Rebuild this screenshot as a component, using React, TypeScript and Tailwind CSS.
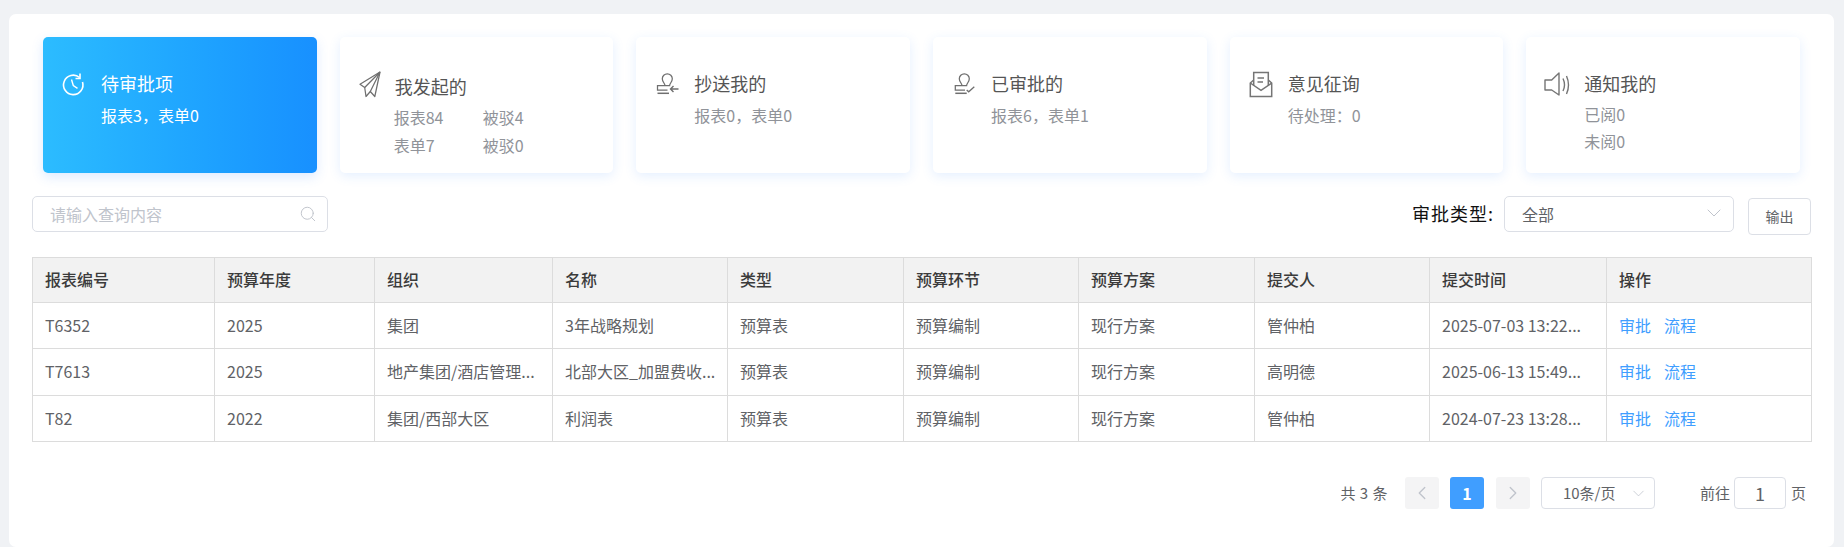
import React from "react";
import { ChevronDown, ChevronLeft, ChevronRight, Search } from "lucide-react";

const FONT = "font-['Microsoft_YaHei','Noto_Sans_CJK_SC','Noto_Sans',sans-serif]";

// all icons share a 24px box, paths are in the coordinates of a 40px crop
function Icon({ children, stroke = "#6f6f6f", box = "8 8 24 24" }: { children: React.ReactNode; stroke?: string; box?: string }) {
  return (
    <svg width="24" height="24" viewBox={box} fill="none" stroke={stroke} strokeWidth="1.25" style={{ overflow: "visible" }}>
      {children}
    </svg>
  );
}

const ClockIcon = () => (
  <Icon stroke="#ffffff" box="9 8 24 24">
    <path strokeWidth="1.6" d="M25.5 12.5 A9.700 9.700 0 1 0 28.500 17" />
    <path strokeWidth="1.6" d="M26 8.500 V13.500 H21.500" />
    <path strokeWidth="1.4" d="M17.500 14.500 L19.300 20.500 L23.500 23.300" />
  </Icon>
);

const PlaneIcon = () => (
  <Icon>
    <path d="M28 7 L8 19.300 L12.700 22.500 L14 31.500 L18.300 26.500 L22.800 31.500 Z" strokeLinejoin="round" />
    <path d="M28 7 L12.700 22.500 M28 7 L18.300 26.500" />
  </Icon>
);

const StampArrowIcon = () => (
  <Icon box="6 8 24 24">
    <path d="M15 20.700 C15 18.300 12.300 17 12.300 13.800 a5 5 0 0 1 10 0 c0 3.200 -2.700 4.500 -2.700 6.900 H7.500 V25 H17.500" />
    <path strokeWidth="1.5" d="M7.500 28.300 H19" />
    <path strokeWidth="1.4" d="M28.500 24 H20.500 M23.500 21 L20.500 24 L23.500 27" />
  </Icon>
);

const StampCheckIcon = () => (
  <Icon box="7 8 24 24">
    <path d="M16 20.700 C16 18.300 13.300 17 13.300 13.800 a5 5 0 0 1 10 0 c0 3.200 -2.700 4.500 -2.700 6.900 H9.300 V25 H19" />
    <path strokeWidth="1.5" d="M9.300 28.300 H20.700" />
    <path d="M20.700 25 L22.700 26.800 L28.300 21.700" />
  </Icon>
);

const MailIcon = () => (
  <Icon stroke="#757575" box="9 8 24 24">
    <path strokeWidth="1.5" d="M12.700 15 L9.300 18 V31.500 H30.700 V18 L27.300 15" />
    <path strokeWidth="1.5" d="M12.700 20.500 V7.500 H27.300 V20.500" />
    <path strokeWidth="1.5" d="M9.300 18 L20 25.300 L30.700 18" />
    <path strokeWidth="1.400" d="M16.500 13 H23 M16.500 17 H22" />
  </Icon>
);

const SpeakerIcon = () => (
  <Icon stroke="#757575" box="11 8 24 24">
    <path strokeWidth="1.400" d="M10 15 H16.700 L24 8 V30 L16.700 25 H10 Z" strokeLinejoin="round" />
    <path strokeWidth="1.400" d="M28 13.500 Q31 20 28 26" />
    <path strokeWidth="1.400" d="M31.500 11 Q35.500 20 31.500 29" />
  </Icon>
);

function Card({ children, active }: { children: React.ReactNode; active?: boolean }) {
  return (
    <div
      className={
        active
          ? "flex-1 h-[136px] rounded-[5px] pt-[36px] pl-[20px] bg-gradient-to-r from-[#2cbcff] to-[#1890ff] shadow-[0_4px_12px_rgba(64,140,255,0.18)]"
          : "flex-1 h-[136px] rounded-[5px] pt-[36px] pl-[20px] bg-white shadow-[0_3px_12px_rgba(64,140,255,0.14)]"
      }
    >
      <div className="flex items-start">{children}</div>
    </div>
  );
}

const rows = [
  ["T6352", "2025", "集团", "3年战略规划", "预算表", "预算编制", "现行方案", "管仲柏", "2025-07-03 13:22..."],
  ["T7613", "2025", "地产集团/酒店管理...", "北部大区_加盟费收...", "预算表", "预算编制", "现行方案", "高明德", "2025-06-13 15:49..."],
  ["T82", "2022", "集团/西部大区", "利润表", "预算表", "预算编制", "现行方案", "管仲柏", "2024-07-23 13:28..."],
];

const heads = ["报表编号", "预算年度", "组织", "名称", "类型", "预算环节", "预算方案", "提交人", "提交时间", "操作"];
const widths = [182, 160, 178, 175, 176, 175, 176, 175, 177, 205];
const rowHeights = ["h-[46px]", "h-[47px]", "h-[46px]"];

export default function App() {
  return (
    <div className={`${FONT} h-[547px] bg-[#f0f2f5] pt-[14px] pl-[9px] pr-[10px] overflow-hidden`}>
      <div className="h-[533px] bg-white rounded-[7px]">
        {/* top cards */}
        <div className="flex gap-[23px] pt-[23px] pl-[34px] pr-[34px]">
          <Card active>
            <ClockIcon />
            <div className="ml-[14px] -mt-[2px] text-white">
              <div className="text-[18px] leading-[24px]">待审批项</div>
              <div className="mt-[6px] text-[16px] leading-[28px]">报表3，表单0</div>
            </div>
          </Card>
          <Card>
            <PlaneIcon />
            <div className="ml-[11px] mt-[1px]">
              <div className="text-[18px] leading-[24px] text-[#555555]">我发起的</div>
              <div className="mt-[5px] -ml-[1px] grid grid-cols-[89px_60px] text-[16px] leading-[28px] text-[#909399]">
                <span>报表84</span>
                <span>被驳4</span>
                <span>表单7</span>
                <span>被驳0</span>
              </div>
            </div>
          </Card>
          <Card>
            <StampArrowIcon />
            <div className="ml-[14px] -mt-[2px]">
              <div className="text-[18px] leading-[24px] text-[#555555]">抄送我的</div>
              <div className="mt-[6px] text-[16px] leading-[28px] text-[#909399]">报表0，表单0</div>
            </div>
          </Card>
          <Card>
            <StampCheckIcon />
            <div className="ml-[14px] -mt-[2px]">
              <div className="text-[18px] leading-[24px] text-[#555555]">已审批的</div>
              <div className="mt-[6px] text-[16px] leading-[28px] text-[#909399]">报表6，表单1</div>
            </div>
          </Card>
          <Card>
            <MailIcon />
            <div className="ml-[14px] -mt-[2px]">
              <div className="text-[18px] leading-[24px] text-[#555555]">意见征询</div>
              <div className="mt-[6px] text-[16px] leading-[28px] text-[#909399]">待处理：0</div>
            </div>
          </Card>
          <Card>
            <SpeakerIcon />
            <div className="ml-[14px] -mt-[2px]">
              <div className="text-[18px] leading-[24px] text-[#555555]">通知我的</div>
              <div className="mt-[6px] text-[16px] leading-[27px] text-[#909399]">
                <div>已阅0</div>
                <div>未阅0</div>
              </div>
            </div>
          </Card>
        </div>

        {/* filters */}
        <div className="flex justify-between items-start mt-[23px] ml-[23px] mr-[23px]">
          <div className="w-[296px] h-[36px] border border-[#dcdfe6] rounded-[5px] flex items-center justify-between pl-[17px] pr-[10px]">
            <span className="text-[16px] text-[#c0c4cc]">请输入查询内容</span>
            <Search size={18} strokeWidth={1.3} className="text-[#c0c4cc]" />
          </div>
          <div className="flex items-start">
            <span className="text-[18px] leading-[35px] text-[#111111] tracking-[1px]">审批类型:</span>
            <div className="ml-[10px] w-[230px] h-[36px] border border-[#dcdfe6] rounded-[5px] flex items-center justify-between pl-[17px] pr-[7px]">
              <span className="text-[16px] text-[#606266]">全部</span>
              <ChevronDown size={24} strokeWidth={1} className="text-[#c0c4cc] -mt-[2px]" />
            </div>
            <button className="ml-[14px] mt-[2px] w-[63px] h-[37px] border border-[#dcdfe6] rounded-[4px] bg-white text-[14px] text-[#606266]">输出</button>
          </div>
        </div>

        {/* table */}
        <div className="mt-[22px] ml-[23px] mr-[24px]">
          <table className="w-full table-fixed border-collapse text-[16px]">
            <colgroup>
              {widths.map((w, i) => (
                <col key={i} style={{ width: w }} />
              ))}
            </colgroup>
            <thead>
              <tr className="h-[45px] bg-[#f2f2f2]">
                {heads.map((h) => (
                  <th key={h} className="border border-[#dcdcdc] pl-[12px] pr-[6px] pb-[2px] text-left font-medium text-[#3b3b3b]">
                    {h}
                  </th>
                ))}
              </tr>
            </thead>
            <tbody>
              {rows.map((r, i) => (
                <tr key={i} className={rowHeights[i]}>
                  {r.map((c, j) => (
                    <td key={j} className="border border-[#dcdcdc] pl-[12px] pr-[6px] pb-[2px] whitespace-nowrap text-[#606266]">
                      {c}
                    </td>
                  ))}
                  <td className="border border-[#dcdcdc] pl-[12px] pb-[2px] text-[#409eff]">
                    <span>审批</span>
                    <span className="ml-[13px]">流程</span>
                  </td>
                </tr>
              ))}
            </tbody>
          </table>
        </div>

        {/* pagination */}
        <div className="flex justify-end items-center mt-[35px] mr-[28px] text-[#606266]">
          <span className="text-[15px] tracking-[0.5px]">共 3 条</span>
          <div className="ml-[17px] w-[34px] h-[32px] rounded-[3px] bg-[#f4f4f5] flex items-center justify-center">
            <ChevronLeft size={22} strokeWidth={1.5} className="text-[#c0c4cc]" />
          </div>
          <div className="ml-[11px] w-[34px] h-[32px] rounded-[3px] bg-[#409eff] flex items-center justify-center text-[16px] font-bold text-white">1</div>
          <div className="ml-[12px] w-[34px] h-[32px] rounded-[3px] bg-[#f4f4f5] flex items-center justify-center">
            <ChevronRight size={22} strokeWidth={1.5} className="text-[#c0c4cc]" />
          </div>
          <div className="ml-[11px] w-[114px] h-[32px] border border-[#dcdfe6] rounded-[4px] flex items-center justify-between pl-[21px] pr-[6px]">
            <span className="text-[15px]">10条/页</span>
            <ChevronDown size={19} strokeWidth={1} className="text-[#c0c4cc]" />
          </div>
          <span className="ml-[45px] text-[15px]">前往</span>
          <div className="ml-[4px] w-[52px] h-[32px] border border-[#dcdfe6] rounded-[4px] flex items-center justify-center text-[18px]">1</div>
          <span className="ml-[5px] text-[15px]">页</span>
        </div>
      </div>
    </div>
  );
}
